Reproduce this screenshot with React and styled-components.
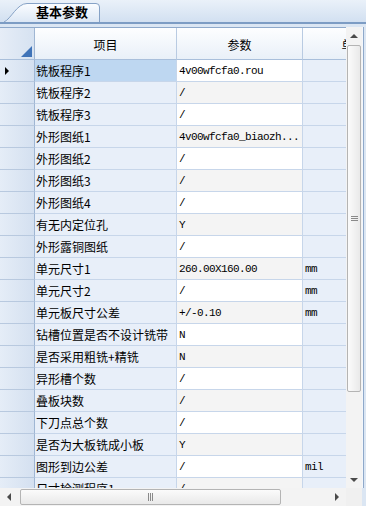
import React from 'react';
import styled, { createGlobalStyle } from 'styled-components';

const GlobalStyle = createGlobalStyle`
  html, body {
    margin: 0;
    padding: 0;
  }
  body {
    width: 366px;
    height: 506px;
    overflow: hidden;
    background: #dbe6f3;
    font-family: "Noto Sans CJK SC", "Liberation Sans", sans-serif;
    color: #000;
  }
`;

const Window = styled.div`
  width: 366px;
  height: 506px;
  display: flex;
  flex-direction: column;
  background: #dbe6f3;
`;

const TabStrip = styled.div`
  height: 22px;
  flex: none;
  display: flex;
  align-items: flex-end;
  padding-left: 3px;
  background: linear-gradient(#eaf1f9, #d2e0f1);
  border-bottom: 2px solid #7c9cc4;
`;

const Tab = styled.div`
  position: relative;
  width: 98px;
  height: 21px;
  padding-left: 33px;
  box-sizing: border-box;
  font-size: 13px;
  font-weight: bold;
  line-height: 22px;
  white-space: nowrap;
`;

const TabShape = styled.svg`
  position: absolute;
  left: 0;
  top: 0;
  z-index: 0;
`;

const TabLabel = styled.span`
  position: relative;
  z-index: 1;
`;

const Panel = styled.div`
  flex: 1;
  display: grid;
  grid-template-columns: 346px 16px;
  grid-template-rows: 461px 18px;
  padding: 3px 4px 0 0;
`;

const GridArea = styled.div`
  overflow: hidden;
  background: #fff;
  border-top: 1px solid #8ea9cb;
`;

const Row = styled.div`
  display: grid;
  grid-template-columns: 35px 142px 126px 102px;
  height: ${(p) => p.$h}px;
  width: 405px;
`;

const Cell = styled.div`
  box-sizing: border-box;
  border-right: 1px solid #c7d6ea;
  border-bottom: 1px solid #c7d6ea;
  display: flex;
  align-items: center;
  font-size: 12px;
  white-space: nowrap;
  overflow: hidden;
`;

const HeadCell = styled(Cell)`
  justify-content: center;
  background: linear-gradient(#fdfeff, #e9f0f8);
  border-right-color: #b9cbe2;
  border-bottom-color: #a9bfdb;
  padding-top: 1px;
`;

const Corner = styled(HeadCell)`
  position: relative;
  background: linear-gradient(to right, #e6edf7, #d6e2f1);
  border-right-color: #9fb6d3;
`;

const CornerMark = styled.span`
  position: absolute;
  right: 2px;
  bottom: 2px;
  width: 0;
  height: 0;
  border-style: solid;
  border-width: 0 0 11px 11px;
  border-color: transparent transparent #3f73b8 transparent;
`;

const Indicator = styled(Cell)`
  position: relative;
  background: linear-gradient(to right, #e5edf7, #d4e0f0);
  border-right-color: #9fb6d3;
  border-bottom-color: #b8c9df;
`;

const Pointer = styled.span`
  position: absolute;
  left: 5px;
  top: 7px;
  width: 0;
  height: 0;
  border-style: solid;
  border-width: 4px 0 4px 4px;
  border-color: transparent transparent transparent #000;
`;

const NameCell = styled(Cell)`
  padding-left: 1px;
  background: ${(p) => (p.$selected ? '#bed7f1' : '#e8eff9')};
`;

const ValueCell = styled(Cell)`
  padding-left: 2px;
  background: ${(p) => (p.$alt ? '#f4f4f4' : '#ffffff')};
  font-family: "Liberation Mono", "DejaVu Sans Mono", monospace;
  font-size: 11px;
  letter-spacing: -0.6px;
`;

const UnitCell = styled(Cell)`
  padding-left: 2px;
  background: #e8eff9;
  font-family: "Liberation Mono", "DejaVu Sans Mono", monospace;
  font-size: 11px;
  letter-spacing: -0.6px;
`;

const VScroll = styled.div`
  display: flex;
  flex-direction: column;
  background: #f3f3f3;
  box-shadow: 1px 0 0 #f4f7fb, 2px 0 0 #8fa9ca;
`;

const HScroll = styled.div`
  display: flex;
  align-items: center;
  background: #f3f3f3;
`;

const ScrollCorner = styled.div`
  background: #f0f0f0;
`;

const ArrowBox = styled.div`
  flex: none;
  width: ${(p) => (p.$horizontal ? 18 : 16)}px;
  height: ${(p) => (p.$horizontal ? 18 : 17)}px;
  display: flex;
  align-items: center;
  justify-content: center;
`;

const arrowBorders = {
  up: 'border-width: 0 4px 4px 4px; border-color: transparent transparent #4a4a4a transparent;',
  down: 'border-width: 4px 4px 0 4px; border-color: #4a4a4a transparent transparent transparent;',
  left: 'border-width: 4px 4px 4px 0; border-color: transparent #4a4a4a transparent transparent;',
  right: 'border-width: 4px 0 4px 4px; border-color: transparent transparent transparent #4a4a4a;',
};

const Arrow = styled.span`
  width: 0;
  height: 0;
  border-style: solid;
  ${(p) => arrowBorders[p.$dir]}
`;

const VThumb = styled.div`
  margin: 1px 1px 0 1px;
  height: 347px;
  box-sizing: border-box;
  border: 1px solid #b4b4b4;
  border-radius: 2px;
  background: linear-gradient(to right, #fbfbfb, #e9e9e9);
  display: flex;
  align-items: center;
  justify-content: center;
`;

const HThumb = styled.div`
  width: 261px;
  height: 16px;
  box-sizing: border-box;
  margin-left: 2px;
  border: 1px solid #b4b4b4;
  border-radius: 2px;
  background: linear-gradient(#fbfbfb, #e9e9e9);
  display: flex;
  align-items: center;
  justify-content: center;
`;

const Track = styled.div`
  flex: 1;
`;

const Grip = styled.span`
  display: block;
  width: ${(p) => (p.$vertical ? 7 : 6)}px;
  height: ${(p) => (p.$vertical ? 6 : 8)}px;
  background: ${(p) =>
    p.$vertical
      ? 'repeating-linear-gradient(#8a8a8a 0 1px, transparent 1px 2px)'
      : 'repeating-linear-gradient(to right, #8a8a8a 0 1px, transparent 1px 2px)'};
`;

const rows = [
  ['铣板程序1', '4v00wfcfa0.rou', ''],
  ['铣板程序2', '/', ''],
  ['铣板程序3', '/', ''],
  ['外形图纸1', '4v00wfcfa0_biaozh...', ''],
  ['外形图纸2', '/', ''],
  ['外形图纸3', '/', ''],
  ['外形图纸4', '/', ''],
  ['有无内定位孔', 'Y', ''],
  ['外形露铜图纸', '/', ''],
  ['单元尺寸1', '260.00X160.00', 'mm'],
  ['单元尺寸2', '/', 'mm'],
  ['单元板尺寸公差', '+/-0.10', 'mm'],
  ['钻槽位置是否不设计铣带', 'N', ''],
  ['是否采用粗铣+精铣', 'N', ''],
  ['异形槽个数', '/', ''],
  ['叠板块数', '/', ''],
  ['下刀点总个数', '/', ''],
  ['是否为大板铣成小板', 'Y', ''],
  ['图形到边公差', '/', 'mil'],
  ['尺寸检测程序1', '/', ''],
];

export default function App() {
  return (
    <Window>
      <GlobalStyle />
      <TabStrip>
        <Tab>
          <TabShape width="98" height="21" viewBox="0 0 98 21">
            <defs>
              <linearGradient id="tabFill" x1="0" y1="0" x2="0" y2="1">
                <stop offset="0" stopColor="#fbfdff" />
                <stop offset="1" stopColor="#dce7f5" />
              </linearGradient>
            </defs>
            <path
              d="M1 21 C 8 18, 14 2.5, 24 2.5 L 93 2.5 Q 96.5 2.5 96.5 6 L 96.5 21"
              fill="url(#tabFill)"
              stroke="#86a2c6"
              strokeWidth="1"
            />
          </TabShape>
          <TabLabel>基本参数</TabLabel>
        </Tab>
      </TabStrip>
      <Panel>
        <GridArea>
          <Row $h={32}>
            <Corner>
              <CornerMark />
            </Corner>
            <HeadCell>项目</HeadCell>
            <HeadCell>参数</HeadCell>
            <HeadCell>单位</HeadCell>
          </Row>
          {rows.map(([name, value, unit], i) => (
            <Row key={name} $h={22}>
              <Indicator>{i === 0 && <Pointer />}</Indicator>
              <NameCell $selected={i === 0}>{name}</NameCell>
              <ValueCell $alt={i % 2 === 1}>{value}</ValueCell>
              <UnitCell>{unit}</UnitCell>
            </Row>
          ))}
        </GridArea>
        <VScroll>
          <ArrowBox>
            <Arrow $dir="up" />
          </ArrowBox>
          <VThumb>
            <Grip $vertical />
          </VThumb>
          <Track />
          <ArrowBox>
            <Arrow $dir="down" />
          </ArrowBox>
        </VScroll>
        <HScroll>
          <ArrowBox $horizontal>
            <Arrow $dir="left" />
          </ArrowBox>
          <HThumb>
            <Grip />
          </HThumb>
          <Track />
          <ArrowBox $horizontal>
            <Arrow $dir="right" />
          </ArrowBox>
        </HScroll>
        <ScrollCorner />
      </Panel>
    </Window>
  );
}
